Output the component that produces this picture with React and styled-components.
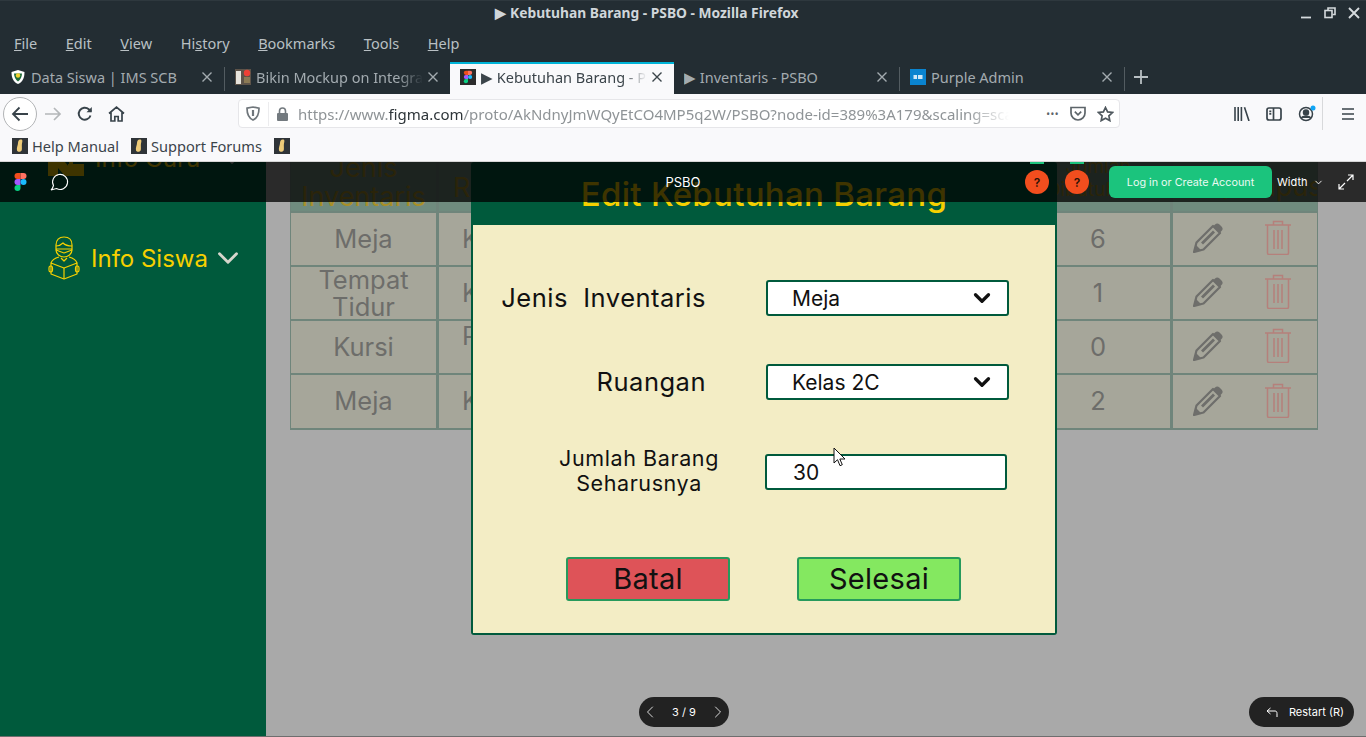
import React from "react";
import styled, { createGlobalStyle } from "styled-components";
import { ChevronDown, ChevronLeft, ChevronRight } from "lucide-react";

const Global = createGlobalStyle`
  html, body { margin: 0; padding: 0; background: #a9a9a9; }
  body { width: 1366px; height: 737px; overflow: hidden; font-family: "Noto Sans", sans-serif; }
  * { box-sizing: border-box; }
`;

const rows = [
  { jenis: ["Meja"], ruang: "Kelas 2C", jumlah: 6 },
  { jenis: ["Tempat", "Tidur"], ruang: "Kelas 1A", jumlah: 1 },
  { jenis: ["Kursi"], ruang: "Perpustakaan", jumlah: 0, top: true },
  { jenis: ["Meja"], ruang: "Kelas 3B", jumlah: 2 },
];

const menus = [
  ["F", "ile"],
  ["E", "dit"],
  ["V", "iew"],
  ["", "Hi", "s", "tory"],
  ["B", "ookmarks"],
  ["T", "ools"],
  ["H", "elp"],
];

// browser chrome icons
const BackIcon = () => (
  <svg width="20" height="20" viewBox="0 0 20 20" fill="none" stroke="#38434a" strokeWidth="1.8">
    <path d="M18 10H3M9.500 3.500L3 10l6.500 6.500" />
  </svg>
);
const ForwardIcon = () => (
  <svg width="18" height="18" viewBox="0 0 18 18" fill="none" stroke="#b4b7b9" strokeWidth="1.7">
    <path d="M1 9h15M10 3l6 6-6 6" />
  </svg>
);
const ReloadIcon = () => (
  <svg width="16" height="16" viewBox="0 0 16 16" fill="none" stroke="#38434a" strokeWidth="1.9">
    <path d="M13.500 9.500A6 6 0 1 1 11.800 3.300L14 5.500" />
    <path d="M14.800 1v5.300H9.500" fill="#38434a" stroke="none" />
  </svg>
);
const HomeIcon = () => (
  <svg width="17" height="16" viewBox="0 0 17 16" fill="none" stroke="#38434a" strokeWidth="1.7">
    <path d="M1 7.500L8.500 1.200 16 7.500M3 6.500V15h3.800v-4.500h3.400V15H14V6.500" />
  </svg>
);
const ShieldIcon = () => (
  <svg width="14" height="15" viewBox="0 0 14 15" fill="none" stroke="#6f767b" strokeWidth="1.700">
    <path d="M1 2.200L7 1l6 1.200c0 5-1 9.500-6 11.800C2 11.700 1 7.200 1 2.200z" />
    <path d="M7 4v6" strokeWidth="2.200" />
  </svg>
);
const LockIcon = () => (
  <svg width="13" height="14" viewBox="0 0 13 14">
    <path d="M3.500 6V4a3 3 0 0 1 6 0v2" fill="none" stroke="#737a7f" strokeWidth="1.600" />
    <rect x="1" y="6" width="11" height="8" rx="1" fill="#737a7f" />
  </svg>
);
const PocketIcon = () => (
  <svg width="16" height="15" viewBox="0 0 16 15" fill="none" stroke="#5d656a" strokeWidth="1.700">
    <path d="M1 1.500h14v5.500a7 7 0 0 1-14 0z" />
    <path d="M4.800 5.700L8 8.800l3.200-3.100" />
  </svg>
);
const StarIcon = () => (
  <svg width="17" height="16" viewBox="0 0 17 16" fill="none" stroke="#4f585e" strokeWidth="1.700">
    <path d="M8.500 1.500l2.100 4.400 4.800.6-3.500 3.300.9 4.800-4.300-2.400-4.300 2.400.9-4.800L1.600 6.500l4.800-.6z" />
  </svg>
);
const LibraryIcon = () => (
  <svg width="16" height="14" viewBox="0 0 16 14" fill="none" stroke="#38434a" strokeWidth="1.600">
    <path d="M1 0v14M4.200 0v14M7.400 0v14M10.500.300L15 14" />
  </svg>
);
const SidebarIcon = () => (
  <svg width="16" height="14" viewBox="0 0 16 14" fill="none" stroke="#38434a" strokeWidth="1.700">
    <rect x="1" y="1" width="14" height="12" rx="2" />
    <path d="M7.500 1v12M3.300 4.300h2M3.300 6.800h2" />
  </svg>
);
const AccountIcon = () => (
  <svg width="18" height="18" viewBox="0 0 18 18" fill="none" stroke="#38434a" strokeWidth="1.500">
    <circle cx="8" cy="9" r="6.500" />
    <circle cx="8" cy="7.500" r="2.500" fill="#38434a" />
    <path d="M3.500 13c1-2.500 8-2.500 9 0" fill="#38434a" />
    <circle cx="15" cy="3" r="2.500" fill="#10a5f5" stroke="none" />
  </svg>
);
const CloseIcon = () => (
  <svg width="10" height="10" viewBox="0 0 10 10" style={{ flex: "none" }}>
    <path d="M.5.500l9 9M9.500.500l-9 9" stroke="currentColor" strokeWidth="1.400" />
  </svg>
);
const BookmarkFavicon = () => (
  <svg width="16" height="16" viewBox="0 0 16 16">
    <rect width="16" height="16" fill="#2f3438" />
    <path d="M8.500 1.500c2.500-.5 2 2 1.500 4-.4 2 .2 4.500-.2 6.500-.4 2.200-4 2.500-4.800.5C4.400 10 6 7 6 5c0-2 1-3.300 2.500-3.500z" fill="#eecb78" />
  </svg>
);
const GuardFavicon = () => (
  <svg width="16" height="16" viewBox="0 0 16 16">
    <path d="M8 1l6.500 2c0 6-2 10-6.500 12C3.500 13 1.500 9 1.500 3z" fill="#fff" />
    <path d="M4 4.500h8c0 3-1.500 6.500-4 8-2.500-1.500-4-5-4-8z" fill="#1d6b3c" />
    <circle cx="8" cy="6.500" r="2.200" fill="#f2d230" />
  </svg>
);
const MockupFavicon = () => (
  <svg width="16" height="16" viewBox="0 0 16 16">
    <rect width="16" height="16" fill="#5d5349" />
    <rect x="1" y="2" width="5" height="13" fill="#e6e3dc" />
    <rect x="9" y="8" width="6" height="6" fill="#8b7a55" />
    <circle cx="12" cy="4" r="3.200" fill="#ee4035" />
  </svg>
);
const FigmaShapes = ({ x = 0, y = 0, scale = 1 }) => (
  <g transform={`translate(${x} ${y}) scale(${scale})`}>
    <path d="M3 0h3v6H3a3 3 0 0 1 0-6z" fill="#f24e1e" />
    <path d="M6 0h3a3 3 0 0 1 0 6H6z" fill="#ff7262" />
    <path d="M3 6h3v6H3a3 3 0 0 1 0-6z" fill="#a259ff" />
    <circle cx="9" cy="9" r="3" fill="#1abcfe" />
    <path d="M3 12h3v3a3 3 0 1 1-3-3z" fill="#0acf83" />
  </g>
);
const FigmaFavicon = () => (
  <svg width="16" height="16" viewBox="0 0 16 16">
    <rect width="16" height="16" fill="#2c2c2c" />
    <FigmaShapes x={3.800} y={1.700} scale={0.7} />
  </svg>
);
const PurpleFavicon = () => (
  <svg width="16" height="16" viewBox="0 0 16 16">
    <rect width="16" height="16" fill="#0a84d0" />
    <path d="M3.500 6h3.500v4H3.500zM8 6h4.500v4H8z" fill="#cfe8f7" />
  </svg>
);

const StudentIcon = () => (
  <svg width="32" height="44" viewBox="0 0 32 44" fill="none" stroke="#f6d000" strokeWidth="1.200" strokeLinejoin="round">
    <path d="M8 9c0-5 3-8 8-8s8 3 8 8v5c0 4-4 7-8 7s-8-3-8-7z" />
    <path d="M8 10c3 0 5-1 7-3 2 2 5 3 9 3" />
    <path d="M8 13h16M8 14l8 3 8-3" />
    <path d="M11 21c-4 1-7 3-8 6M21 21c4 1 7 3 8 6M13 22l3 3 3-3" />
    <path d="M3 27l13 5 13-5v11l-13 5-13-5z" />
    <path d="M16 32v11" />
    <rect x="1" y="30" width="3.500" height="6" rx="1.700" />
    <rect x="27.500" y="30" width="3.500" height="6" rx="1.700" />
  </svg>
);
const TeacherIcon = () => (
  <svg width="36" height="36" viewBox="0 0 36 36" fill="#f6d000">
    <rect x="0" y="0" width="10" height="36" />
    <path d="M10 22h7l4 5v-5h4v14h-8l-7-8z" />
    <rect x="20" y="24" width="16" height="12" />
  </svg>
);
const TrashIcon = () => (
  <svg width="28" height="35" viewBox="0 0 28 35" fill="none" stroke="#b5807b" strokeWidth="1.500">
    <path d="M1 5h26M9.500 5V1.500h9V5M3.500 5v28c0 1 .5 1.500 1.500 1.500h18c1 0 1.500-.5 1.500-1.500V5" />
    <path d="M10 10v19M14 10v19M18 10v19" />
  </svg>
);
const PencilIcon = () => (
  <svg width="31" height="31" viewBox="0 0 31 31">
    <path d="M1 30l2.500-9.500L20 4l7 7-16.500 16.500z" fill="none" stroke="#6e6e6b" strokeWidth="2.200" strokeLinejoin="round" />
    <path d="M1 30l2-7 5 5zM22 2.500c1.500-1.500 3-1.500 4.500 0l2 2c1.500 1.500 1.500 3 0 4.500l-1.500 1.500-6.500-6.500zM8 20.500L20 8.500l2 2-12 12z" fill="#6e6e6b" />
  </svg>
);
const CommentIcon = () => (
  <svg width="19" height="18" viewBox="0 0 19 18" fill="none" stroke="#fff" strokeWidth="1.100">
    <path d="M3.500 12.500A7.500 7.500 0 1 1 6.500 15.500L1 17c1.200-1 2-2.700 2.500-4.500z" />
  </svg>
);
const ExpandIcon = () => (
  <svg width="16" height="16" viewBox="0 0 16 16" fill="none" stroke="#fff" strokeWidth="1.200">
    <path d="M9 7l6-6M10 1h5v5M7 9l-6 6M6 15H1v-5" />
  </svg>
);
const ReturnIcon = () => (
  <svg width="12" height="10" viewBox="0 0 12 10" fill="none" stroke="#fff" strokeWidth="1">
    <path d="M4.500 1L1 4l3.500 3M1 4h8c1.500 0 2 1 2 2.500V10" />
  </svg>
);
const CursorIcon = () => (
  <svg width="14" height="21" viewBox="0 0 14 21">
    <path d="M1 1v15l3.500-3.300 2.500 6 2.300-1-2.500-5.700H12z" fill="#fff" stroke="#111" strokeWidth="1" strokeLinejoin="round" />
  </svg>
);

export default function App() {
  return (
    <Page>
      <Global />
      <TitleBar>
        <TitleText>▶ Kebutuhan Barang - PSBO - Mozilla Firefox</TitleText>
        <WindowControls>
          <svg width="12" height="12" viewBox="0 0 12 12"><path d="M1 10.500h10" stroke="#d5dadd" strokeWidth="1.800" /></svg>
          <svg width="12" height="12" viewBox="0 0 12 12" fill="none" stroke="#d5dadd" strokeWidth="1.600"><path d="M4 3V1h7v6.500H8.500" /><rect x="1" y="3.500" width="7" height="7" /></svg>
          <svg width="12" height="12" viewBox="0 0 12 12"><path d="M1 1l10 10M11 1L1 11" stroke="#d5dadd" strokeWidth="1.900" /></svg>
        </WindowControls>
      </TitleBar>
      <MenuBar>
        {menus.map((m) => (
          <MenuItem key={m.join("")}>
            {m.length === 2 ? (
              <>
                <u>{m[0]}</u>
                {m[1]}
              </>
            ) : (
              <>
                {m[1]}
                <u>{m[2]}</u>
                {m[3]}
              </>
            )}
          </MenuItem>
        ))}
      </MenuBar>
      <TabStrip>
        <Tab $w={224}>
          <GuardFavicon />
          <TabLabel>Data Siswa | IMS SCB</TabLabel>
          <CloseIcon />
        </Tab>
        <TabDivider />
        <Tab $w={225}>
          <MockupFavicon />
          <TabLabel $fade>Bikin Mockup on Integrated</TabLabel>
          <CloseIcon />
        </Tab>
        <ActiveTab>
          <FigmaFavicon />
          <TabLabel $fade>▶ Kebutuhan Barang - PSBO</TabLabel>
          <CloseIcon />
        </ActiveTab>
        <Tab $w={225}>
          <TabLabel>▶ Inventaris - PSBO</TabLabel>
          <CloseIcon />
        </Tab>
        <TabDivider />
        <Tab $w={224}>
          <PurpleFavicon />
          <TabLabel>Purple Admin</TabLabel>
          <CloseIcon />
        </Tab>
        <TabDivider />
        <NewTab>
          <svg width="16" height="16" viewBox="0 0 16 16"><path d="M8 1v14M1 8h14" stroke="#b8bfc3" strokeWidth="1.800" /></svg>
        </NewTab>
      </TabStrip>
      <NavBar>
        <BackButton>
          <BackIcon />
        </BackButton>
        <NavIcon $w={30}>
          <ForwardIcon />
        </NavIcon>
        <NavIcon $w={34}>
          <ReloadIcon />
        </NavIcon>
        <NavIcon $w={28}>
          <HomeIcon />
        </NavIcon>
        <UrlBar>
          <ShieldIcon />
          <UrlDivider />
          <LockIcon />
          <UrlText>
            https://www.<b>figma.com</b>/proto/AkNdnyJmWQyEtCO4MP5q2W/PSBO?node-id=389%3A179&scaling=scale-down
          </UrlText>
          <UrlActions>
            <Dots>•••</Dots>
            <PocketIcon />
            <StarIcon />
          </UrlActions>
        </UrlBar>
        <ToolIcons>
          <LibraryIcon />
          <SidebarIcon />
          <AccountIcon />
          <ToolDivider />
          <svg width="14" height="12" viewBox="0 0 14 12"><path d="M1 1h12M1 6h12M1 11h12" stroke="#38434a" strokeWidth="1.700" /></svg>
        </ToolIcons>
      </NavBar>
      <BookmarksBar>
        <Bookmark>
          <BookmarkFavicon />
          Help Manual
        </Bookmark>
        <Bookmark>
          <BookmarkFavicon />
          Support Forums
        </Bookmark>
        <Bookmark>
          <BookmarkFavicon />
        </Bookmark>
      </BookmarksBar>

      <Viewer>
        <Frame>
          <Sidebar>
            <SideItem>
              <TeacherIcon />
              <SideLabel>Info Guru</SideLabel>
              <ChevronDown size={34} color="#c8c8c8" strokeWidth={2} />
            </SideItem>
            <SideItem $student>
              <StudentIcon />
              <SideLabel>Info Siswa</SideLabel>
              <ChevronDown size={34} color="#d6d6cc" strokeWidth={2} />
            </SideItem>
          </Sidebar>
          <Content>
            <InventoryTable>
              <HeadCell>
                Jenis
                <br />
                Inventaris
              </HeadCell>
              <HeadCell $left>Ruangan</HeadCell>
              <HeadCell />
              <HeadCell $small>
                Jumlah
                <br />
                Dibutuhkan
              </HeadCell>
              <HeadCell $action>Edit / Hapus</HeadCell>
              {rows.map((r, i) => (
                <React.Fragment key={i}>
                  <Cell $tight={r.jenis.length > 1}>
                    {r.jenis.map((t) => (
                      <div key={t}>{t}</div>
                    ))}
                  </Cell>
                  <Cell $left $up={r.top}>
                    {r.ruang}
                  </Cell>
                  <Cell />
                  <Cell>{r.jumlah}</Cell>
                  <ActionCell>
                    <PencilIcon />
                    <TrashIcon />
                  </ActionCell>
                </React.Fragment>
              ))}
            </InventoryTable>
          </Content>
        </Frame>

        <Modal>
          <ModalHead>Edit Kebutuhan Barang</ModalHead>
          <ModalBody>
            <FormRow>
              <FieldLabel>Jenis&nbsp; Inventaris</FieldLabel>
              <SelectBox>
                Meja
                <ChevronDown size={26} color="#111" strokeWidth={3} />
              </SelectBox>
            </FormRow>
            <FormRow>
              <FieldLabel>Ruangan</FieldLabel>
              <SelectBox>
                Kelas 2C
                <ChevronDown size={26} color="#111" strokeWidth={3} />
              </SelectBox>
            </FormRow>
            <FormRow $input>
              <FieldLabel $small>
                Jumlah Barang
                <br />
                Seharusnya
              </FieldLabel>
              <InputBox>30</InputBox>
            </FormRow>
            <Buttons>
              <ActionButton $bg="#de5358">Batal</ActionButton>
              <ActionButton $bg="#84e860">Selesai</ActionButton>
            </Buttons>
          </ModalBody>
        </Modal>

        <FigmaBar>
          <FigmaLeft>
            <svg width="13" height="18" viewBox="0 0 12 18">
              <FigmaShapes />
            </svg>
            <CommentIcon />
          </FigmaLeft>
          <FigmaTitle>PSBO</FigmaTitle>
          <FigmaRight>
            <HelpDot>?</HelpDot>
            <HelpDot>?</HelpDot>
            <LoginButton>Log in or Create Account</LoginButton>
            <WidthSelect>
              Width <ChevronDown size={11} />
            </WidthSelect>
            <ExpandIcon />
          </FigmaRight>
        </FigmaBar>

        <Pager>
          <ChevronLeft size={20} strokeWidth={1} />
          <span>3 / 9</span>
          <ChevronRight size={20} strokeWidth={1} />
        </Pager>
        <RestartPill>
          <ReturnIcon />
          Restart (R)
        </RestartPill>
        <Cursor>
          <CursorIcon />
        </Cursor>
      </Viewer>
    </Page>
  );
}

const Page = styled.div`
  width: 1366px;
  height: 737px;
  display: flex;
  flex-direction: column;
  overflow: hidden;
`;

const TitleBar = styled.div`
  height: 31px;
  flex: none;
  background: #232d33;
  border-top: 1px solid #2e383e;
  display: flex;
  align-items: center;
  justify-content: center;
  position: relative;
`;

const TitleText = styled.div`
  color: #d0d6da;
  font-size: 13.800px;
  font-weight: 700;
  margin: -7px 72px 0 0;
`;

const WindowControls = styled.div`
  position: absolute;
  right: 6px;
  top: 6px;
  display: flex;
  gap: 12px;
`;

const MenuBar = styled.div`
  height: 31px;
  flex: none;
  background: #232d33;
  display: flex;
  align-items: center;
  padding: 0 0 8px 14px;
  gap: 28.600px;
`;

const MenuItem = styled.div`
  color: #b9c0c4;
  font-size: 14.500px;
`;

const TabStrip = styled.div`
  height: 32px;
  flex: none;
  background: #232d33;
  display: flex;
  align-items: stretch;
`;

const Tab = styled.div`
  width: ${(p) => p.$w}px;
  padding: 0 12px 2px 10px;
  display: flex;
  align-items: center;
  gap: 5px;
  color: #a3abb0;
  font-size: 14.500px;
`;

const ActiveTab = styled(Tab)`
  width: 224px;
  padding-bottom: 4px;
  background: #f9f9fb;
  border-top: 2px solid #00b4d8;
  color: #3b444a;
`;

const TabLabel = styled.span`
  flex: 1;
  white-space: nowrap;
  overflow: hidden;
  ${(p) =>
    p.$fade &&
    `mask-image: linear-gradient(to right, #000 85%, transparent);`}
`;

const TabDivider = styled.div`
  width: 1px;
  margin: 5px 0 3px;
  background: #535c61;
  flex: none;
`;

const NewTab = styled.div`
  width: 32px;
  padding-bottom: 2px;
  display: flex;
  align-items: center;
  justify-content: center;
`;

const NavBar = styled.div`
  height: 37px;
  flex: none;
  background: #f9f9fb;
  display: flex;
  align-items: center;
  padding: 2px 0 0 3px;
`;

const BackButton = styled.div`
  width: 34px;
  height: 34px;
  border: 1px solid #b2b4b6;
  border-radius: 50%;
  background: #fff;
  display: flex;
  align-items: center;
  justify-content: center;
  margin-right: 1px;
`;

const NavIcon = styled.div`
  width: ${(p) => p.$w}px;
  display: flex;
  justify-content: center;
`;

const UrlBar = styled.div`
  width: 882px;
  height: 29px;
  margin-left: 108px;
  background: #fff;
  border: 1px solid #e6e6e9;
  border-radius: 4px;
  display: flex;
  align-items: center;
  padding: 0 5px 0 7px;
  gap: 7px;
`;

const UrlDivider = styled.div`
  width: 1px;
  height: 24px;
  background: #ececee;
  margin: 0 0 0 1px;
`;

const UrlText = styled.div`
  flex: 1;
  margin-left: 2px;
  font-size: 15px;
  color: #8f9497;
  white-space: nowrap;
  overflow: hidden;
  mask-image: linear-gradient(to right, #000 94%, transparent);

  b {
    font-weight: 400;
    color: #2e3539;
  }
`;

const UrlActions = styled.div`
  display: flex;
  align-items: center;
  gap: 11px;
  margin-left: 30px;
`;

const Dots = styled.span`
  font-size: 10px;
  color: #5d656a;
  letter-spacing: 0.5px;
`;

const ToolIcons = styled.div`
  display: flex;
  align-items: center;
  gap: 16px;
  margin-left: 114px;
`;

const ToolDivider = styled.div`
  width: 1px;
  height: 33px;
  background: #d8d9db;
  margin: 0 2px 0 -10px;
`;

const BookmarksBar = styled.div`
  height: 31px;
  flex: none;
  background: #f9f9fb;
  border-bottom: 1px solid #d6d6d6;
  display: flex;
  align-items: center;
  padding-left: 12px;
  gap: 12px;
`;

const Bookmark = styled.div`
  display: flex;
  align-items: center;
  gap: 4px;
  font-size: 14.600px;
  color: #3b444a;
`;

const Viewer = styled.div`
  position: relative;
  flex: 1;
  overflow: hidden;
  background: #a9a9a9;
  border-bottom: 1px solid #6e6e6e;
  font-family: Inter, sans-serif;
`;

/* the prototype is scrolled, its first rows lie above the top edge */
const Frame = styled.div`
  display: flex;
  margin-top: -30px;
  height: 604px;
`;

const Sidebar = styled.div`
  width: 266px;
  flex: none;
  background: #005a3c;
  padding: 0 0 0 48px;
`;

const SideItem = styled.div`
  display: flex;
  align-items: center;
  gap: 9px;
  height: 44px;
  margin-top: ${(p) => (p.$student ? "56px" : "4px")};
`;

const SideLabel = styled.div`
  color: #f6d000;
  font-size: 24px;
  margin-left: 2px;
  width: 111px;
  white-space: nowrap;
`;

const Content = styled.div`
  flex: 1;
  padding: 8px 0 0 24px;
`;

const InventoryTable = styled.div`
  width: 1028px;
  display: grid;
  grid-template-columns: 145px 160px 421px 144px 144px;
  grid-template-rows: 69px 52px 52px 52px 53px;
  gap: 2px 3px;
  background: #6f857b;
  border: solid #6f857b;
  border-width: 2px 1px;
`;

const headPadding = (p) => {
  if (p.$left) return "0 0 9px 14px";
  if (p.$small) return "0 0 10px";
  if (p.$action) return "0 0 10px";
  return "0";
};

const HeadCell = styled.div`
  background: #6f8b7e;
  color: #a88f28;
  font-size: ${(p) => (p.$small ? "19px" : "27px")};
  line-height: ${(p) => (p.$small ? "23px" : "29px")};
  text-align: center;
  white-space: nowrap;
  overflow: hidden;
  display: flex;
  align-items: flex-end;
  justify-content: ${(p) => (p.$left ? "flex-start" : "center")};
  padding: ${headPadding};
`;

const Cell = styled.div`
  background: #a6a69a;
  color: #6d6d6a;
  font-size: 25.500px;
  display: flex;
  flex-direction: column;
  align-items: ${(p) => (p.$left ? "flex-start" : "center")};
  justify-content: ${(p) => (p.$up ? "flex-start" : "center")};
  padding-left: ${(p) => (p.$left ? "23px" : "0")};
  line-height: ${(p) => (p.$tight ? "27px" : "1.2")};
  white-space: nowrap;
  overflow: hidden;
`;

const ActionCell = styled.div`
  background: #a6a69a;
  display: flex;
  align-items: center;
  padding: 0 0 3px 20px;
  gap: 40px;
`;

const Modal = styled.div`
  position: absolute;
  left: 471px;
  top: 0;
  width: 586px;
  height: 473px;
  background: #005a3c;
  border: 2px solid #005a3c;
  border-radius: 3px;
  display: flex;
  flex-direction: column;
`;

const ModalHead = styled.div`
  height: 61px;
  flex: none;
  padding-top: 11px;
  text-align: center;
  color: #f6d000;
  font-size: 33px;
  font-weight: 500;
  letter-spacing: 0.3px;
  line-height: 38px;
  white-space: nowrap;
`;

const ModalBody = styled.div`
  flex: 1;
  background: #f3edc5;
  display: flex;
  flex-direction: column;
  padding-top: 55px;
`;

const FormRow = styled.div`
  display: flex;
  align-items: center;
  height: 36px;
  margin-bottom: ${(p) => (p.$input ? "67px" : "48px")};
  margin-top: ${(p) => (p.$input ? "6px" : "0")};
  gap: ${(p) => (p.$input ? "44px" : "60px")};
`;

const FieldLabel = styled.div`
  width: ${(p) => (p.$small ? "248px" : "233px")};
  text-align: ${(p) => (p.$small ? "center" : "right")};
  padding: ${(p) => (p.$small ? "0 0 3px 84px" : "0 0 2px")};
  color: #111;
  font-size: ${(p) => (p.$small ? "21.500px" : "25.500px")};
  letter-spacing: ${(p) => (p.$small ? "0.6px" : "0.5px")};
  line-height: 25px;
  white-space: nowrap;
`;

const SelectBox = styled.div`
  width: 243px;
  height: 36px;
  background: #fff;
  border: 2px solid #005a3c;
  border-radius: 3px;
  font-size: 21px;
  color: #111;
  display: flex;
  align-items: center;
  justify-content: space-between;
  padding: 0 12px 0 24px;
`;

const InputBox = styled(SelectBox)`
  width: 242px;
  padding-left: 26px;
`;

const Buttons = styled.div`
  display: flex;
  padding-left: 93px;
  gap: 67px;
`;

const ActionButton = styled.div`
  width: 164px;
  height: 44px;
  background: ${(p) => p.$bg};
  border: 2px solid #269a5c;
  border-radius: 3px;
  color: #111;
  font-size: 29px;
  letter-spacing: 0.3px;
  padding-bottom: 2px;
  display: flex;
  align-items: center;
  justify-content: center;
`;

const FigmaBar = styled.div`
  position: absolute;
  left: 0;
  top: 0;
  width: 100%;
  height: 40px;
  background: rgba(0, 0, 0, 0.75);
  display: flex;
  align-items: center;
  color: #fff;
`;

const FigmaLeft = styled.div`
  display: flex;
  align-items: center;
  gap: 23px;
  padding-left: 14px;
  width: 650px;
`;

const FigmaTitle = styled.div`
  width: 66px;
  text-align: center;
  font-size: 13px;
`;

const FigmaRight = styled.div`
  display: flex;
  align-items: center;
  margin-left: 309px;
`;

const HelpDot = styled.div`
  position: relative;
  width: 24px;
  height: 24px;
  border-radius: 50%;
  background: #f24e1e;
  color: #2a1208;
  font-size: 12px;
  font-weight: 600;
  display: flex;
  align-items: center;
  justify-content: center;
  margin-right: 16px;

  &::before {
    content: "";
    position: absolute;
    left: 5px;
    top: -8px;
    width: 14px;
    height: 2px;
    background: #1bc47d;
  }
`;

const LoginButton = styled.div`
  width: 163px;
  height: 32px;
  margin-left: 4px;
  border-radius: 6px;
  background: #1bc47d;
  font-size: 10.800px;
  color: #eafaf3;
  display: flex;
  align-items: center;
  justify-content: center;
`;

const WidthSelect = styled.div`
  display: flex;
  align-items: center;
  gap: 5px;
  font-size: 11px;
  margin: 0 14px 0 5px;
`;

const Pager = styled.div`
  position: absolute;
  left: 639px;
  bottom: 9px;
  width: 90px;
  height: 30px;
  border-radius: 15px;
  background: #222;
  color: #fff;
  font-size: 11px;
  display: flex;
  align-items: center;
  justify-content: space-between;
  padding: 0 1px;
`;

const RestartPill = styled.div`
  position: absolute;
  right: 12px;
  bottom: 9px;
  width: 105px;
  height: 30px;
  border-radius: 15px;
  background: #222;
  color: #fff;
  font-size: 11px;
  display: flex;
  align-items: center;
  justify-content: flex-end;
  gap: 11px;
  padding-right: 10px;
`;

const Cursor = styled.div`
  position: absolute;
  left: 833px;
  top: 285px;
  display: flex;
`;
